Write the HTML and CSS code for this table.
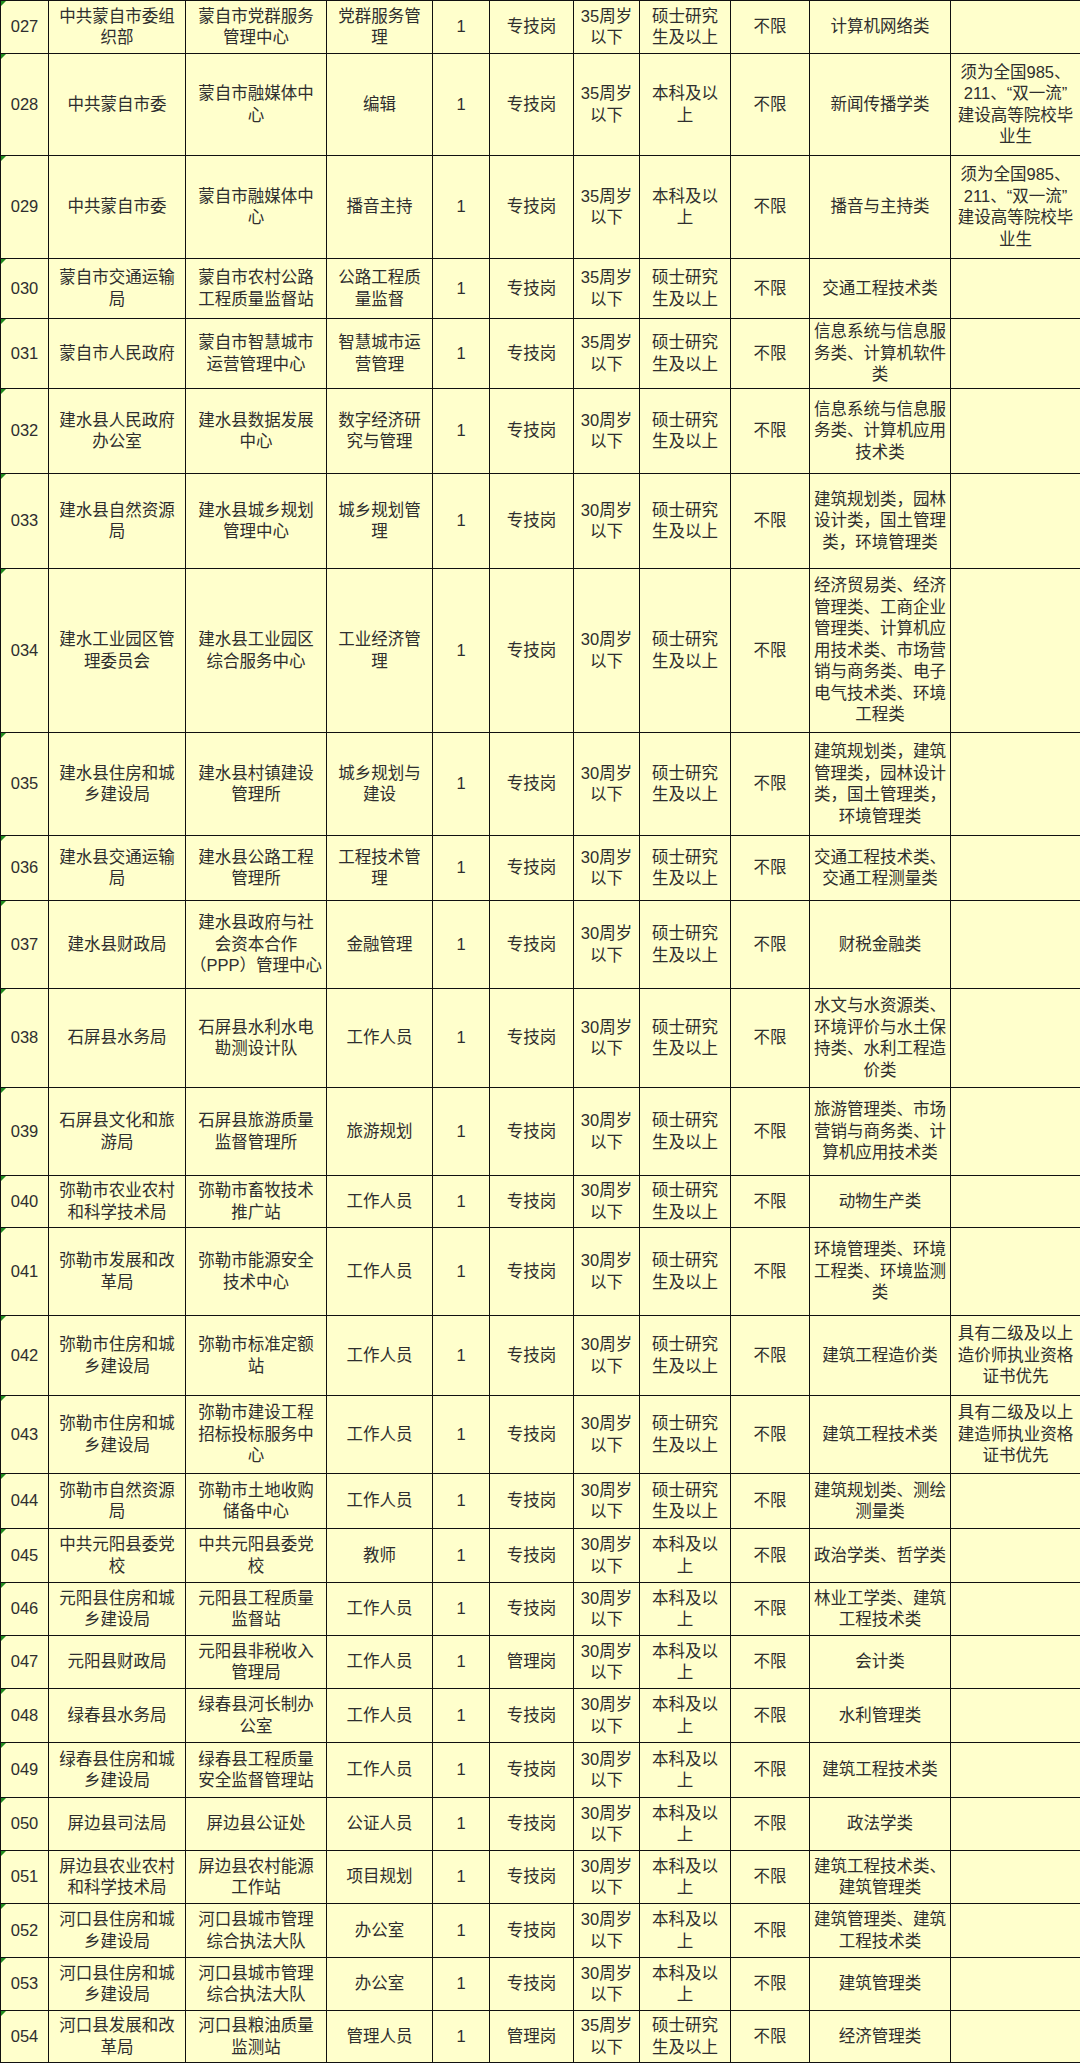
FILE: index.html
```html
<!DOCTYPE html>
<html lang="zh-CN">
<head>
<meta charset="utf-8">
<title>招聘岗位表</title>
<link rel="stylesheet" href="styles.css">
</head>
<body>
<table class="jobs">
<colgroup>
<col class="c-no"><col class="c-dept"><col class="c-unit"><col class="c-post"><col class="c-num"><col class="c-type"><col class="c-age"><col class="c-edu"><col class="c-deg"><col class="c-major"><col class="c-note">
</colgroup>
<tbody>
<tr class="h53"><td class="no">027</td><td>中共蒙自市委组<br>织部</td><td>蒙自市党群服务<br>管理中心</td><td>党群服务管<br>理</td><td>1</td><td>专技岗</td><td>35周岁<br>以下</td><td>硕士研究<br>生及以上</td><td>不限</td><td>计算机网络类</td><td></td></tr>
<tr class="h102"><td class="no">028</td><td>中共蒙自市委</td><td>蒙自市融媒体中<br>心</td><td>编辑</td><td>1</td><td>专技岗</td><td>35周岁<br>以下</td><td>本科及以<br>上</td><td>不限</td><td>新闻传播学类</td><td>须为全国985、<br>211、“双一流”<br>建设高等院校毕<br>业生</td></tr>
<tr class="h103"><td class="no">029</td><td>中共蒙自市委</td><td>蒙自市融媒体中<br>心</td><td>播音主持</td><td>1</td><td>专技岗</td><td>35周岁<br>以下</td><td>本科及以<br>上</td><td>不限</td><td>播音与主持类</td><td>须为全国985、<br>211、“双一流”<br>建设高等院校毕<br>业生</td></tr>
<tr class="h60"><td class="no">030</td><td>蒙自市交通运输<br>局</td><td>蒙自市农村公路<br>工程质量监督站</td><td>公路工程质<br>量监督</td><td>1</td><td>专技岗</td><td>35周岁<br>以下</td><td>硕士研究<br>生及以上</td><td>不限</td><td>交通工程技术类</td><td></td></tr>
<tr class="h70"><td class="no">031</td><td>蒙自市人民政府</td><td>蒙自市智慧城市<br>运营管理中心</td><td>智慧城市运<br>营管理</td><td>1</td><td>专技岗</td><td>35周岁<br>以下</td><td>硕士研究<br>生及以上</td><td>不限</td><td>信息系统与信息服<br>务类、计算机软件<br>类</td><td></td></tr>
<tr class="h85"><td class="no">032</td><td>建水县人民政府<br>办公室</td><td>建水县数据发展<br>中心</td><td>数字经济研<br>究与管理</td><td>1</td><td>专技岗</td><td>30周岁<br>以下</td><td>硕士研究<br>生及以上</td><td>不限</td><td>信息系统与信息服<br>务类、计算机应用<br>技术类</td><td></td></tr>
<tr class="h95"><td class="no">033</td><td>建水县自然资源<br>局</td><td>建水县城乡规划<br>管理中心</td><td>城乡规划管<br>理</td><td>1</td><td>专技岗</td><td>30周岁<br>以下</td><td>硕士研究<br>生及以上</td><td>不限</td><td>建筑规划类，园林<br>设计类，国土管理<br>类，环境管理类</td><td></td></tr>
<tr class="h164"><td class="no">034</td><td>建水工业园区管<br>理委员会</td><td>建水县工业园区<br>综合服务中心</td><td>工业经济管<br>理</td><td>1</td><td>专技岗</td><td>30周岁<br>以下</td><td>硕士研究<br>生及以上</td><td>不限</td><td>经济贸易类、经济<br>管理类、工商企业<br>管理类、计算机应<br>用技术类、市场营<br>销与商务类、电子<br>电气技术类、环境<br>工程类</td><td></td></tr>
<tr class="h103"><td class="no">035</td><td>建水县住房和城<br>乡建设局</td><td>建水县村镇建设<br>管理所</td><td>城乡规划与<br>建设</td><td>1</td><td>专技岗</td><td>30周岁<br>以下</td><td>硕士研究<br>生及以上</td><td>不限</td><td>建筑规划类，建筑<br>管理类，园林设计<br>类，国土管理类，<br>环境管理类</td><td></td></tr>
<tr class="h65"><td class="no">036</td><td>建水县交通运输<br>局</td><td>建水县公路工程<br>管理所</td><td>工程技术管<br>理</td><td>1</td><td>专技岗</td><td>30周岁<br>以下</td><td>硕士研究<br>生及以上</td><td>不限</td><td>交通工程技术类、<br>交通工程测量类</td><td></td></tr>
<tr class="h88"><td class="no">037</td><td>建水县财政局</td><td>建水县政府与社<br>会资本合作<br>（PPP）管理中心</td><td>金融管理</td><td>1</td><td>专技岗</td><td>30周岁<br>以下</td><td>硕士研究<br>生及以上</td><td>不限</td><td>财税金融类</td><td></td></tr>
<tr class="h99"><td class="no">038</td><td>石屏县水务局</td><td>石屏县水利水电<br>勘测设计队</td><td>工作人员</td><td>1</td><td>专技岗</td><td>30周岁<br>以下</td><td>硕士研究<br>生及以上</td><td>不限</td><td>水文与水资源类、<br>环境评价与水土保<br>持类、水利工程造<br>价类</td><td></td></tr>
<tr class="h88"><td class="no">039</td><td>石屏县文化和旅<br>游局</td><td>石屏县旅游质量<br>监督管理所</td><td>旅游规划</td><td>1</td><td>专技岗</td><td>30周岁<br>以下</td><td>硕士研究<br>生及以上</td><td>不限</td><td>旅游管理类、市场<br>营销与商务类、计<br>算机应用技术类</td><td></td></tr>
<tr class="h52"><td class="no">040</td><td>弥勒市农业农村<br>和科学技术局</td><td>弥勒市畜牧技术<br>推广站</td><td>工作人员</td><td>1</td><td>专技岗</td><td>30周岁<br>以下</td><td>硕士研究<br>生及以上</td><td>不限</td><td>动物生产类</td><td></td></tr>
<tr class="h88"><td class="no">041</td><td>弥勒市发展和改<br>革局</td><td>弥勒市能源安全<br>技术中心</td><td>工作人员</td><td>1</td><td>专技岗</td><td>30周岁<br>以下</td><td>硕士研究<br>生及以上</td><td>不限</td><td>环境管理类、环境<br>工程类、环境监测<br>类</td><td></td></tr>
<tr class="h80"><td class="no">042</td><td>弥勒市住房和城<br>乡建设局</td><td>弥勒市标准定额<br>站</td><td>工作人员</td><td>1</td><td>专技岗</td><td>30周岁<br>以下</td><td>硕士研究<br>生及以上</td><td>不限</td><td>建筑工程造价类</td><td>具有二级及以上<br>造价师执业资格<br>证书优先</td></tr>
<tr class="h78"><td class="no">043</td><td>弥勒市住房和城<br>乡建设局</td><td>弥勒市建设工程<br>招标投标服务中<br>心</td><td>工作人员</td><td>1</td><td>专技岗</td><td>30周岁<br>以下</td><td>硕士研究<br>生及以上</td><td>不限</td><td>建筑工程技术类</td><td>具有二级及以上<br>建造师执业资格<br>证书优先</td></tr>
<tr class="h55"><td class="no">044</td><td>弥勒市自然资源<br>局</td><td>弥勒市土地收购<br>储备中心</td><td>工作人员</td><td>1</td><td>专技岗</td><td>30周岁<br>以下</td><td>硕士研究<br>生及以上</td><td>不限</td><td>建筑规划类、测绘<br>测量类</td><td></td></tr>
<tr class="h54"><td class="no">045</td><td>中共元阳县委党<br>校</td><td>中共元阳县委党<br>校</td><td>教师</td><td>1</td><td>专技岗</td><td>30周岁<br>以下</td><td>本科及以<br>上</td><td>不限</td><td>政治学类、哲学类</td><td></td></tr>
<tr class="h53"><td class="no">046</td><td>元阳县住房和城<br>乡建设局</td><td>元阳县工程质量<br>监督站</td><td>工作人员</td><td>1</td><td>专技岗</td><td>30周岁<br>以下</td><td>本科及以<br>上</td><td>不限</td><td>林业工学类、建筑<br>工程技术类</td><td></td></tr>
<tr class="h53"><td class="no">047</td><td>元阳县财政局</td><td>元阳县非税收入<br>管理局</td><td>工作人员</td><td>1</td><td>管理岗</td><td>30周岁<br>以下</td><td>本科及以<br>上</td><td>不限</td><td>会计类</td><td></td></tr>
<tr class="h54"><td class="no">048</td><td>绿春县水务局</td><td>绿春县河长制办<br>公室</td><td>工作人员</td><td>1</td><td>专技岗</td><td>30周岁<br>以下</td><td>本科及以<br>上</td><td>不限</td><td>水利管理类</td><td></td></tr>
<tr class="h55"><td class="no">049</td><td>绿春县住房和城<br>乡建设局</td><td>绿春县工程质量<br>安全监督管理站</td><td>工作人员</td><td>1</td><td>专技岗</td><td>30周岁<br>以下</td><td>本科及以<br>上</td><td>不限</td><td>建筑工程技术类</td><td></td></tr>
<tr class="h53"><td class="no">050</td><td>屏边县司法局</td><td>屏边县公证处</td><td>公证人员</td><td>1</td><td>专技岗</td><td>30周岁<br>以下</td><td>本科及以<br>上</td><td>不限</td><td>政法学类</td><td></td></tr>
<tr class="h53"><td class="no">051</td><td>屏边县农业农村<br>和科学技术局</td><td>屏边县农村能源<br>工作站</td><td>项目规划</td><td>1</td><td>专技岗</td><td>30周岁<br>以下</td><td>本科及以<br>上</td><td>不限</td><td>建筑工程技术类、<br>建筑管理类</td><td></td></tr>
<tr class="h54"><td class="no">052</td><td>河口县住房和城<br>乡建设局</td><td>河口县城市管理<br>综合执法大队</td><td>办公室</td><td>1</td><td>专技岗</td><td>30周岁<br>以下</td><td>本科及以<br>上</td><td>不限</td><td>建筑管理类、建筑<br>工程技术类</td><td></td></tr>
<tr class="h53"><td class="no">053</td><td>河口县住房和城<br>乡建设局</td><td>河口县城市管理<br>综合执法大队</td><td>办公室</td><td>1</td><td>专技岗</td><td>30周岁<br>以下</td><td>本科及以<br>上</td><td>不限</td><td>建筑管理类</td><td></td></tr>
<tr class="h52"><td class="no">054</td><td>河口县发展和改<br>革局</td><td>河口县粮油质量<br>监测站</td><td>管理人员</td><td>1</td><td>管理岗</td><td>35周岁<br>以下</td><td>硕士研究<br>生及以上</td><td>不限</td><td>经济管理类</td><td></td></tr>
</tbody>
</table>
</body>
</html>
```

FILE: styles.css
```css
html, body {
  margin: 0;
  padding: 0;
  background: #ffffff;
}

.jobs {
  table-layout: fixed;
  border-collapse: collapse;
  width: 1080px;
  background: #ffffcc;
  font-family: "Liberation Sans", "Noto Sans CJK SC", sans-serif;
  font-size: 16.5px;
  line-height: 21.5px;
  color: #2e2e2e;
}

.c-no { width: 48px; }
.c-dept { width: 137px; }
.c-unit { width: 141px; }
.c-post { width: 106px; }
.c-num { width: 57px; }
.c-type { width: 84px; }
.c-age { width: 66px; }
.c-edu { width: 91px; }
.c-deg { width: 79px; }
.c-major { width: 141px; }
.c-note { width: 130px; }

.jobs td {
  border: 1px solid #111;
  padding: 0 2px;
  text-align: center;
  vertical-align: middle;
  white-space: nowrap;
  overflow: hidden;
}

.jobs td.no {
  position: relative;
}

.jobs td.no::before {
  content: "";
  position: absolute;
  left: 0;
  top: 0;
  border-top: 5px solid #1f8a1f;
  border-right: 5px solid transparent;
}

.h52 { height: 52px; }
.h53 { height: 53px; }
.h54 { height: 54px; }
.h55 { height: 55px; }
.h60 { height: 60px; }
.h65 { height: 65px; }
.h70 { height: 70px; }
.h78 { height: 78px; }
.h80 { height: 80px; }
.h85 { height: 85px; }
.h88 { height: 88px; }
.h95 { height: 95px; }
.h99 { height: 99px; }
.h102 { height: 102px; }
.h103 { height: 103px; }
.h164 { height: 164px; }
```
